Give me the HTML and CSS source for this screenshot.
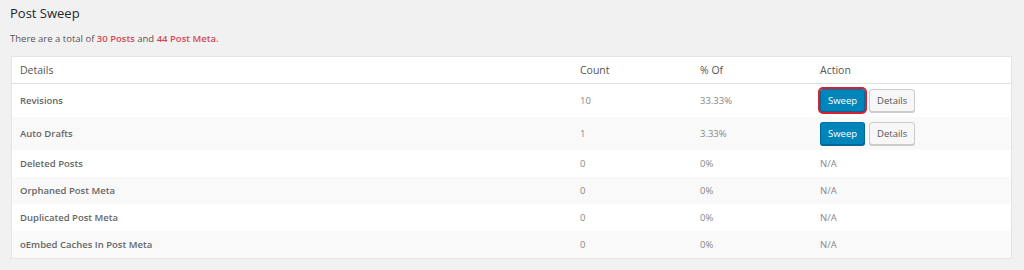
FILE: index.html
```html
<!DOCTYPE html>
<html lang="en">
<head>
  <meta charset="UTF-8">
  <title>Post Sweep</title>
  <link rel="stylesheet" href="styles.css">
</head>
<body>
  <h2 class="title">Post Sweep</h2>
  <p class="summary">There are a total of <strong class="total">30 Posts</strong> and <strong class="total">44 Post Meta.</strong></p>

  <table class="sweep-table">
    <thead>
      <tr>
        <th class="col-details">Details</th>
        <th class="col-count">Count</th>
        <th class="col-percent">% Of</th>
        <th class="col-action">Action</th>
      </tr>
    </thead>
    <tbody>
      <tr class="has-action">
        <td class="name">Revisions</td>
        <td>10</td>
        <td>33.33%</td>
        <td>
          <div class="actions">
            <button class="button button-primary is-focused">Sweep</button>
            <button class="button">Details</button>
          </div>
        </td>
      </tr>
      <tr class="has-action alt">
        <td class="name">Auto Drafts</td>
        <td>1</td>
        <td>3.33%</td>
        <td>
          <div class="actions">
            <button class="button button-primary">Sweep</button>
            <button class="button">Details</button>
          </div>
        </td>
      </tr>
      <tr>
        <td class="name">Deleted Posts</td>
        <td>0</td>
        <td>0%</td>
        <td>N/A</td>
      </tr>
      <tr class="alt">
        <td class="name">Orphaned Post Meta</td>
        <td>0</td>
        <td>0%</td>
        <td>N/A</td>
      </tr>
      <tr>
        <td class="name">Duplicated Post Meta</td>
        <td>0</td>
        <td>0%</td>
        <td>N/A</td>
      </tr>
      <tr class="alt">
        <td class="name">oEmbed Caches In Post Meta</td>
        <td>0</td>
        <td>0%</td>
        <td>N/A</td>
      </tr>
    </tbody>
  </table>
</body>
</html>
```

FILE: styles.css
```css
body {
  margin: 0;
  padding: 0 12px 0 11px;
  background: #f1f1f1;
  font-family: 'Open Sans', 'Noto Sans', sans-serif;
  font-size: 9.5px;
  color: #555;
}

.title {
  margin: 0 0 0 -1px;
  padding-top: 3px;
  font-size: 13px;
  font-weight: 400;
  line-height: 20px;
  color: #23282d;
}

.summary {
  margin: 9px 0 0 -1px;
  line-height: 14px;
}

.total {
  font-weight: 600;
  color: #d64856;
}

.sweep-table {
  width: 100%;
  margin-top: 10px;
  border-collapse: collapse;
  background: #fff;
  border: 1px solid #e5e5e5;
  box-shadow: 0 1px 1px rgba(0, 0, 0, 0.04);
}

.sweep-table th,
.sweep-table td {
  padding: 0 8px;
  text-align: left;
  vertical-align: middle;
  height: 27px;
}

.sweep-table th {
  font-weight: 400;
  font-size: 10.5px;
  color: #555;
  height: 26px;
  border-bottom: 1px solid #e1e1e1;
}

.col-details { width: 544px; }
.col-count,
.col-percent { width: 104px; }

.sweep-table td {
  color: #888;
}

.sweep-table td.name {
  font-weight: 600;
  color: #666;
}

.sweep-table tr.has-action td {
  height: 33px;
}

.sweep-table tr.alt td {
  background: #f9f9f9;
}

.actions {
  display: flex;
  gap: 4px;
  align-items: center;
}

.button {
  height: 23px;
  padding: 0 7px;
  font-family: inherit;
  font-size: 9.5px;
  line-height: 21px;
  color: #555;
  background: #f7f7f7;
  border: 1px solid #ccc;
  border-radius: 3px;
  box-shadow: 0 1px 0 #ccc;
  cursor: pointer;
}

.button-primary {
  color: #fff;
  background: #0085ba;
  border-color: #0073aa #006799 #006799;
  box-shadow: 0 1px 0 #006799;
}

.button.is-focused {
  outline: 2px solid #d6202f;
  outline-offset: 0;
}
```
